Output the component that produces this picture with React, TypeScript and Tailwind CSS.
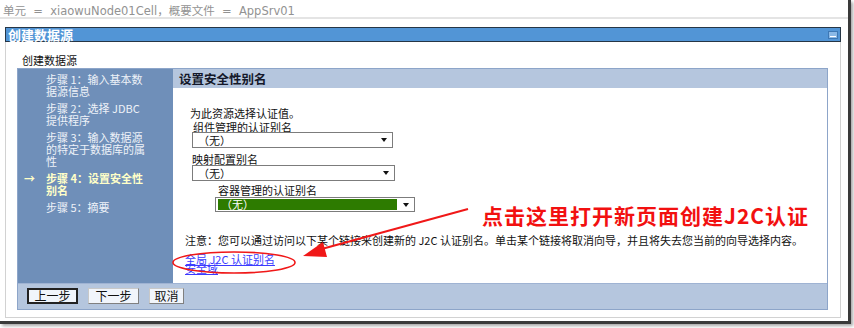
import React from "react";

const CJK = "font-['Noto_Sans_CJK_SC',sans-serif]";

function Select({ w, green }: { w: number; green?: boolean }) {
  return (
    <div
      className="h-full border border-[#7c7c7c] bg-white flex items-center"
      style={{ width: w }}
    >
      {green ? (
        <div className="ml-[2px] h-[11px] w-[179px] bg-[#2d7b00] flex items-center">
          <span className="pl-[3px] text-[11px] leading-[11px] text-white">（无）</span>
        </div>
      ) : (
        <span className="pl-[5px] text-[11px] leading-[11px] text-[#111]">（无）</span>
      )}
      <div className="ml-auto mr-[5px] w-0 h-0 border-l-[3.5px] border-r-[3.5px] border-t-[4px] border-l-transparent border-r-transparent border-t-[#111]" />
    </div>
  );
}

function Step({ children, active }: { children: React.ReactNode; active?: boolean }) {
  return (
    <div className="flex">
      <div className="w-[28px] pl-[6px] text-[11px] leading-[12px] text-[#ffffc8] font-bold">{active ? "→" : ""}</div>
      <div
        className={
          "text-[11px] leading-[12px] whitespace-nowrap " +
          (active ? "text-[#ffffc8] font-bold" : "text-[#eef2f8]")
        }
      >
        {children}
      </div>
    </div>
  );
}

function Btn({ children, w, primary }: { children: React.ReactNode; w: number; primary?: boolean }) {
  return (
    <div
      className={
        "h-[16px] bg-[#f1f5fb] flex items-center justify-center text-[12px] leading-[12px] text-[#111] " +
        (primary ? "border-2 border-[#222]" : "border border-[#808080] border-t-[#c8c8c8] border-l-[#c8c8c8]")
      }
      style={{ width: w }}
    >
      {children}
    </div>
  );
}

export default function App() {
  return (
    <div className={"w-[854px] h-[328px] bg-white relative overflow-hidden " + CJK}>
      <div className="w-[851px] h-[324px] border-r-[3px] border-b-[3px] border-[#3a3a3a] shadow-[2px_2px_3px_rgba(0,0,0,0.35)] flex flex-col">
        {/* top breadcrumb */}
        <div className="h-[19px] border-b-2 border-[#e4e4e4] pl-[3px] pt-[5px] text-[11.5px] leading-[12px] text-[#929292] whitespace-pre font-['DejaVu_Sans','Noto_Sans_CJK_SC',sans-serif]">
          单元  =  xiaowuNode01Cell，概要文件  =  AppSrv01
        </div>

        <div className="ml-[5px] mt-[8px] w-[836px] flex flex-col">
          {/* title bar */}
          <div className="h-[15px] bg-[#5295d6] border border-[#263646] flex items-center">
            <span className="pl-[2px] text-[13px] leading-[13px] font-bold text-white whitespace-nowrap">创建数据源</span>
            <div className="ml-auto mr-[2px] w-[10px] h-[8px] bg-[#8ab8e6] border border-[#3e78b4] flex items-end justify-center pb-[1px]">
              <div className="w-[6px] h-[1px] bg-white" />
            </div>
          </div>

          {/* body */}
          <div className="h-[276px] border-l border-r border-b border-[#d2d2d2] flex flex-col">
            <div className="ml-[16px] mt-[13px] h-[11px] text-[11px] leading-[11px] text-[#111] whitespace-nowrap">创建数据源</div>

            <div className="ml-[11px] mt-[2px] w-[811px] h-[242px] border border-[#8da5c9] flex flex-col">
              <div className="flex h-[214px]">
                {/* nav */}
                <div className="w-[155px] bg-[#6f8fb9] pt-[4px] flex flex-col gap-[5px]">
                  <Step>
                    步骤 1：输入基本数
                    <br />
                    据源信息
                  </Step>
                  <Step>
                    步骤 2：选择 JDBC
                    <br />
                    提供程序
                  </Step>
                  <Step>
                    步骤 3：输入数据源
                    <br />
                    的特定于数据库的属
                    <br />
                    性
                  </Step>
                  <Step active>
                    步骤 4：设置安全性
                    <br />
                    别名
                  </Step>
                  <Step>步骤 5：摘要</Step>
                </div>

                {/* content */}
                <div className="flex-1 flex flex-col">
                  <div className="h-[19px] bg-[#b5c6de] flex items-center pl-[6px]">
                    <span className="text-[12.5px] leading-[13px] font-bold text-[#14182a] whitespace-nowrap">设置安全性别名</span>
                  </div>
                  <div className="flex flex-col text-[#111]">
                    <div className="ml-[17px] mt-[20px] text-[11px] leading-[10px] whitespace-nowrap">为此资源选择认证值。</div>
                    <div className="ml-[20px] mt-[5px] text-[11px] leading-[9px] whitespace-nowrap">组件管理的认证别名</div>
                    <div className="ml-[19px] h-[16px]">
                      <Select w={201} />
                    </div>
                    <div className="ml-[19px] mt-[7px] text-[11px] leading-[9px] whitespace-nowrap">映射配置别名</div>
                    <div className="ml-[19px] mt-[1px] h-[16px]">
                      <Select w={203} />
                    </div>
                    <div className="ml-[45px] mt-[5px] text-[11px] leading-[9px] whitespace-nowrap">容器管理的认证别名</div>
                    <div className="ml-[42px] mt-[2px] h-[15px]">
                      <Select w={200} green />
                    </div>
                    <div className="ml-[12px] mt-[23px] text-[11px] leading-[10px] whitespace-nowrap">
                      注意：您可以通过访问以下某个链接来创建新的 J2C 认证别名。单击某个链接将取消向导，并且将失去您当前的向导选择内容。
                    </div>
                    <div className="ml-[12px] mt-[10px] flex flex-col items-start text-[11px] leading-[9px] text-[#3b3bff]">
                      <span className="underline whitespace-nowrap">全局 J2C 认证别名</span>
                      <span className="underline whitespace-nowrap">安全域</span>
                    </div>
                  </div>
                </div>
              </div>

              {/* button bar */}
              <div className="flex-1 bg-[#b5c6de] border-t border-[#9fb3d3] flex items-start pt-[4px] pl-[9px] gap-[10px]">
                <Btn w={51} primary>
                  上一步
                </Btn>
                <Btn w={51}>下一步</Btn>
                <Btn w={35}>取消</Btn>
              </div>
            </div>
          </div>
        </div>
      </div>

      {/* annotation overlay */}
      <svg className="absolute left-0 top-0" width="854" height="328" viewBox="0 0 854 328">
        <ellipse cx="234" cy="262.5" rx="61" ry="10.5" fill="none" stroke="#f01818" strokeWidth="1.6" />
        <line x1="468" y1="209" x2="318" y2="250" stroke="#f01818" strokeWidth="2" />
        <polygon points="303,256 323,242 327,257" fill="#f01818" />
      </svg>
      <div className="absolute left-[482px] top-[205px] text-[21px] leading-[21px] font-bold text-[#f21010] tracking-[1px] whitespace-nowrap">
        点击这里打开新页面创建J2C认证
      </div>
    </div>
  );
}
